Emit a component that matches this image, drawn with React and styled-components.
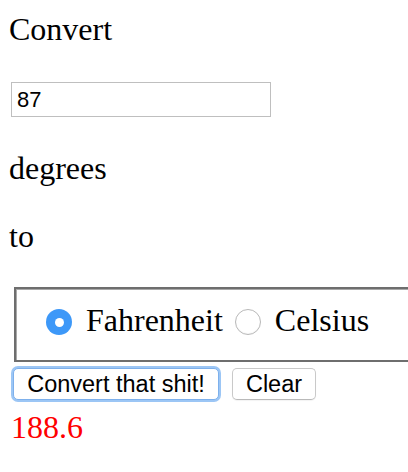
import React, { useState } from "react";
import styled, { createGlobalStyle } from "styled-components";

const Global = createGlobalStyle`
  html, body { margin: 0; padding: 0; background: #ffffff; }
  body { overflow: hidden; }
`;

const Page = styled.div`
  padding: 11px 0 0 9px;
  font-family: "Liberation Serif", "Times New Roman", serif;
  font-size: 32px;
  color: #000;
  overflow: hidden;
`;

const Text = styled.p`
  margin: ${(p) => p.$top || 0}px 0 0 0;
  line-height: 36px;
  font-size: 32px;
`;

const NumberInput = styled.input`
  display: block;
  box-sizing: border-box;
  margin: 35px 0 0 2px;
  width: 260px;
  height: 35px;
  border: 1px solid #bfbfbf;
  padding: 0 5px;
  font-family: "Liberation Sans", Arial, sans-serif;
  font-size: 22px;
  color: #000;
  outline: none;
  background: #fff;
`;

const Fieldset = styled.fieldset`
  box-sizing: border-box;
  margin: 33px 0 0 5px;
  width: 420px;
  height: 75px;
  border: 2px solid #6e6e6e;
  box-shadow: inset 1px 1px 0 #a8a8a8;
  padding: 0 0 5px 30px;
  display: flex;
  align-items: center;
  gap: 12px;
`;

const Option = styled.label`
  display: flex;
  align-items: center;
  gap: 14px;
`;

const Radio = styled.span`
  box-sizing: border-box;
  width: 26px;
  height: 26px;
  border-radius: 50%;
  display: flex;
  align-items: center;
  justify-content: center;
  flex: none;
  background: ${(p) => (p.$checked ? "#3d98f8" : "#ffffff")};
  border: ${(p) => (p.$checked ? "none" : "1px solid #b8b8b8")};
  box-shadow: ${(p) => (p.$checked ? "none" : "inset 0 -1px 1px rgba(0,0,0,0.04)")};

  &::after {
    content: "";
    display: ${(p) => (p.$checked ? "block" : "none")};
    width: 9px;
    height: 9px;
    border-radius: 50%;
    background: #fff;
  }
`;

const OptionText = styled.span`
  line-height: 36px;
  margin-bottom: 5px;
  font-size: 32px;
`;

const ButtonRow = styled.div`
  display: flex;
  gap: 13px;
  margin: 6px 0 0 4px;
`;

const Button = styled.button`
  box-sizing: border-box;
  width: ${(p) => p.$w}px;
  height: 32px;
  padding: 0;
  background: #fff;
  border: 1px solid ${(p) => (p.$focus ? "#7db0ec" : "#c9c9c9")};
  border-bottom-color: ${(p) => (p.$focus ? "#7db0ec" : "#b9b9b9")};
  border-radius: 5px;
  font-family: "Liberation Sans", Arial, sans-serif;
  font-size: 23.5px;
  color: #000;
  box-shadow: ${(p) =>
    p.$focus ? "0 0 0 2px #9cc6f5" : "0 1px 1px rgba(0,0,0,0.05)"};
  outline: none;
`;

const Result = styled.div`
  margin: 9px 0 0 2px;
  line-height: 36px;
  color: #ff0000;
  font-size: 32px;
`;

export default function App() {
  const [value, setValue] = useState("87");
  const [unit, setUnit] = useState("f");
  return (
    <Page>
      <Global />
      <Text>Convert</Text>
      <NumberInput value={value} onChange={(e) => setValue(e.target.value)} />
      <Text $top={33}>degrees</Text>
      <Text $top={32}>to</Text>
      <Fieldset>
        <Option onClick={() => setUnit("f")}>
          <Radio $checked={unit === "f"} />
          <OptionText>Fahrenheit</OptionText>
        </Option>
        <Option onClick={() => setUnit("c")}>
          <Radio $checked={unit === "c"} />
          <OptionText>Celsius</OptionText>
        </Option>
      </Fieldset>
      <ButtonRow>
        <Button $w={206} $focus>
          Convert that shit!
        </Button>
        <Button $w={84}>Clear</Button>
      </ButtonRow>
      <Result>188.6</Result>
    </Page>
  );
}
